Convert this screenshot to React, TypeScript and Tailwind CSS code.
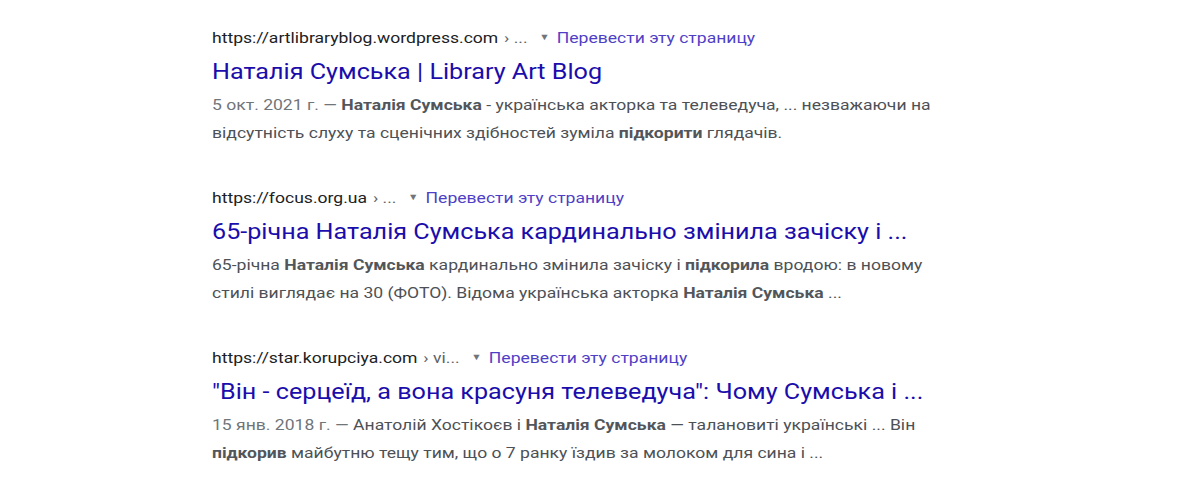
const results = [
  {
    url: "https://artlibraryblog.wordpress.com",
    path: "› ...",
    title: "Наталія Сумська | Library Art Blog",
    lines: [
      [
        { t: "5 окт. 2021 г. — ", muted: true },
        { t: "Наталія Сумська", b: true },
        { t: " - українська акторка та телеведуча, ... незважаючи на" },
      ],
      [
        { t: "відсутність слуху та сценічних здібностей зуміла " },
        { t: "підкорити", b: true },
        { t: " глядачів." },
      ],
    ],
  },
  {
    url: "https://focus.org.ua",
    path: "› ...",
    title: "65-річна Наталія Сумська кардинально змінила зачіску і ...",
    lines: [
      [
        { t: "65-річна " },
        { t: "Наталія Сумська", b: true },
        { t: " кардинально змінила зачіску і " },
        { t: "підкорила", b: true },
        { t: " вродою: в новому" },
      ],
      [
        { t: "стилі виглядає на 30 (ФОТО). Відома українська акторка " },
        { t: "Наталія Сумська", b: true },
        { t: " ..." },
      ],
    ],
  },
  {
    url: "https://star.korupciya.com",
    path: "› vi...",
    title: "\"Він - серцеїд, а вона красуня телеведуча\": Чому Сумська і ...",
    lines: [
      [
        { t: "15 янв. 2018 г. — ", muted: true },
        { t: "Анатолій Хостікоєв і " },
        { t: "Наталія Сумська", b: true },
        { t: " — талановиті українські ... Він" },
      ],
      [
        { t: "підкорив", b: true },
        { t: " майбутню тещу тим, що о 7 ранку їздив за молоком для сина і ..." },
      ],
    ],
  },
];

type Piece = { t: string; b?: boolean; muted?: boolean };

function Result({ r }: { r: (typeof results)[number] }) {
  return (
    <div className="flex flex-col">
      <div className="flex h-6 items-center text-[15px] text-[#202124]">
        <span>{r.url}</span>
        <span className="ml-[5px] text-[#5f6368]">{r.path}</span>
        <span className="ml-[10px] mr-[6px] text-[9px] text-[#70757a]">▼</span>
        <span className="text-[15px] text-[#4f3fc6]">Перевести эту страницу</span>
      </div>
      <div className="mt-[6px] flex h-8 items-center text-[21.5px] text-[#1a0dab]">{r.title}</div>
      <div className="mt-[3px] text-[15px] leading-[28px] text-[#4d5156]">
        {r.lines.map((line, i) => (
          <div key={i}>
            {(line as Piece[]).map((p, j) => (
              <span
                key={j}
                className={p.b ? "font-bold text-[#52565b]" : p.muted ? "text-[#70757a]" : undefined}
              >
                {p.t}
              </span>
            ))}
          </div>
        ))}
      </div>
    </div>
  );
}

export default function App() {
  return (
    <div className="h-[500px] w-[1200px] overflow-hidden bg-white pl-[212px] pt-[26px] font-['Roboto',sans-serif]">
      {/* the capture is wider than tall: stretch the column to match */}
      <div className="flex origin-top-left scale-x-[1.17] flex-col gap-[39px]">
        {results.map((r) => (
          <Result key={r.url} r={r} />
        ))}
      </div>
    </div>
  );
}
